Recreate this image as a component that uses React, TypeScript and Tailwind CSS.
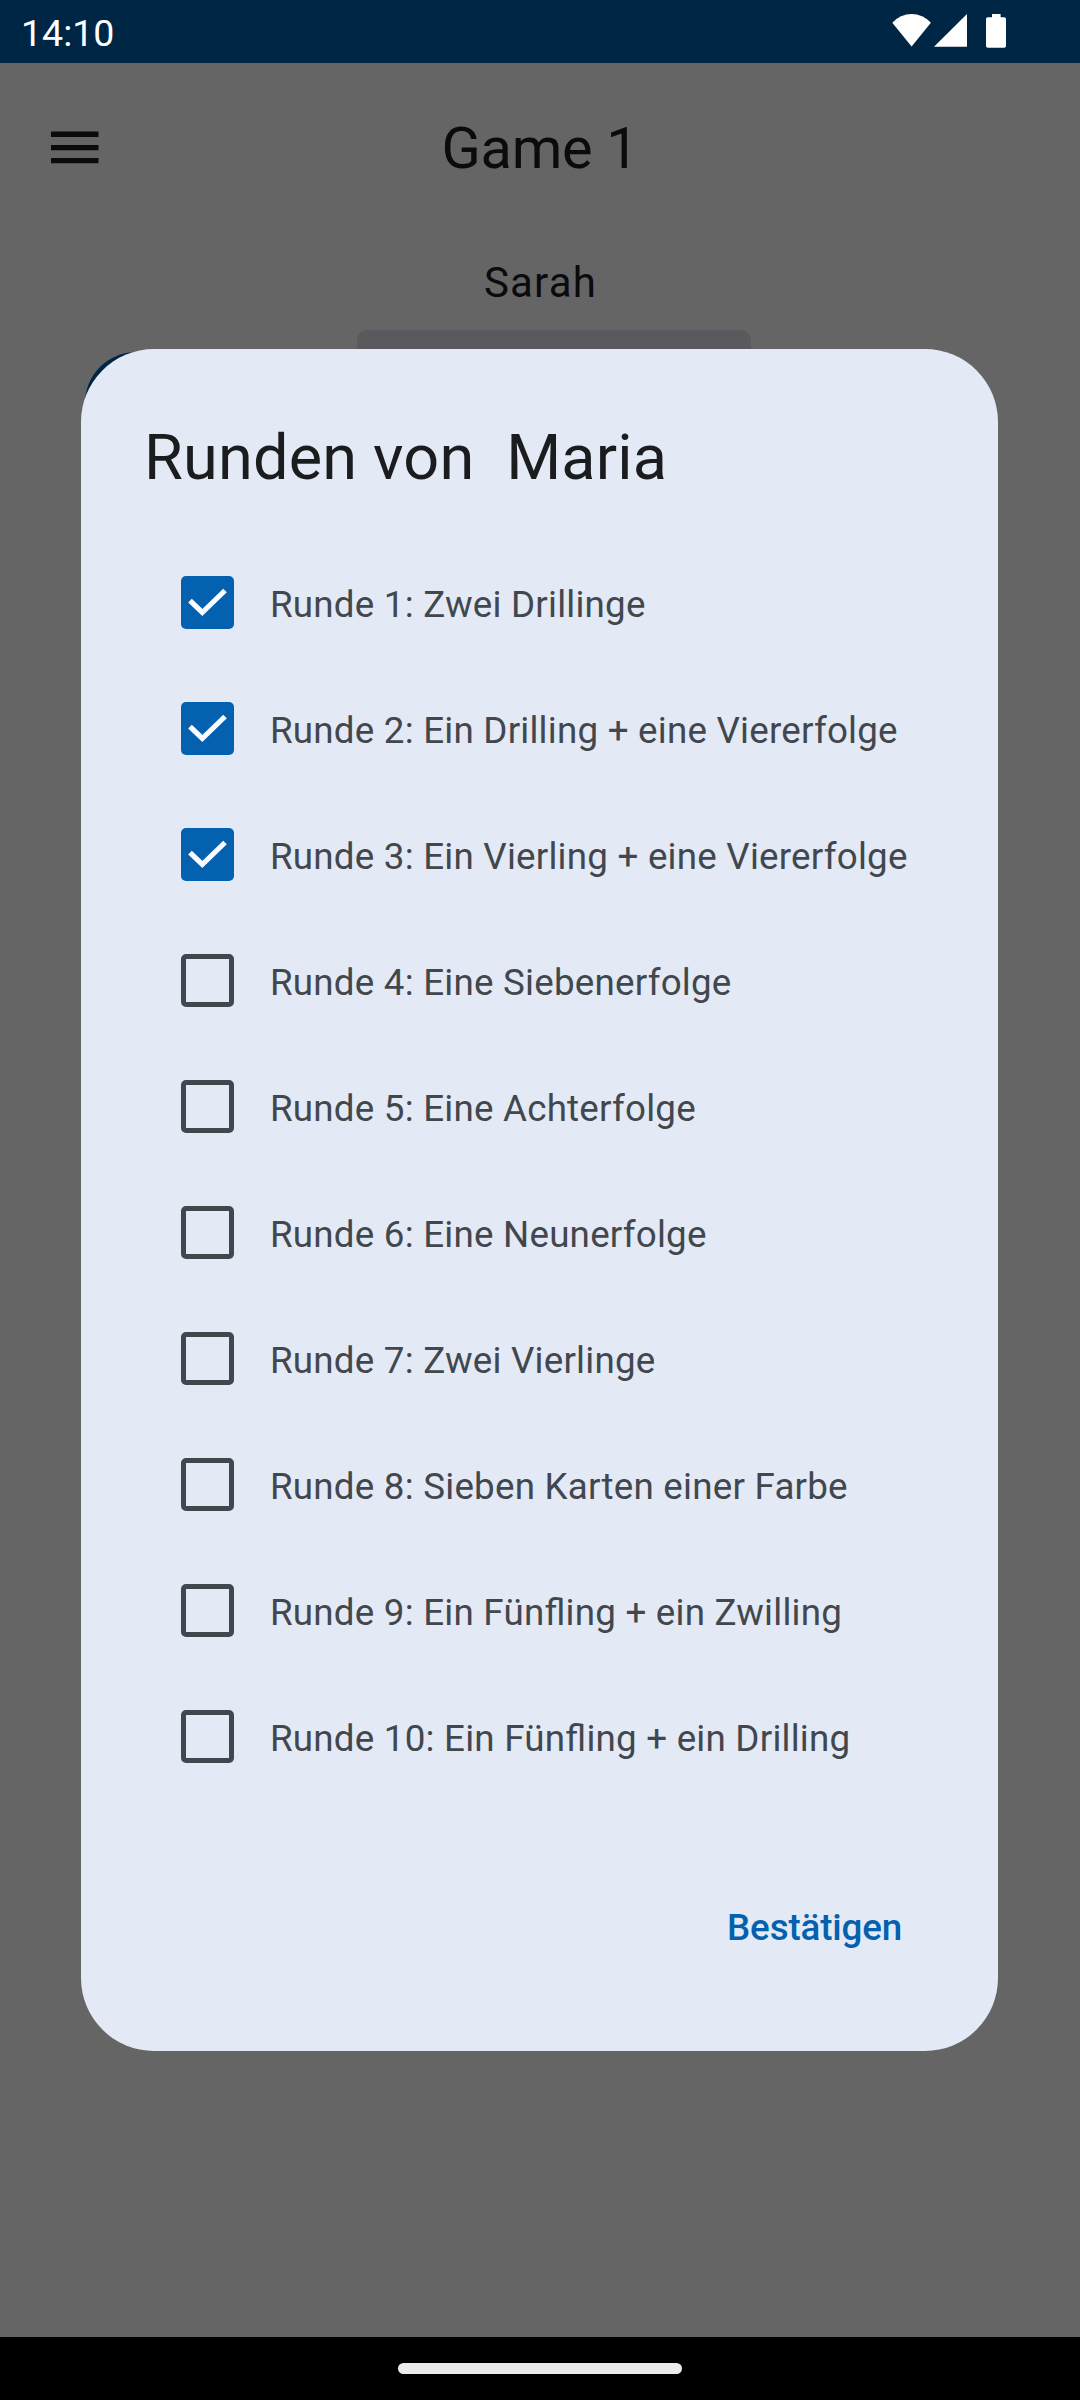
const rounds = [
  { label: 'Runde 1: Zwei Drillinge', done: true },
  { label: 'Runde 2: Ein Drilling + eine Viererfolge', done: true },
  { label: 'Runde 3: Ein Vierling + eine Viererfolge', done: true },
  { label: 'Runde 4: Eine Siebenerfolge', done: false },
  { label: 'Runde 5: Eine Achterfolge', done: false },
  { label: 'Runde 6: Eine Neunerfolge', done: false },
  { label: 'Runde 7: Zwei Vierlinge', done: false },
  { label: 'Runde 8: Sieben Karten einer Farbe', done: false },
  { label: 'Runde 9: Ein Fünfling + ein Zwilling', done: false },
  { label: 'Runde 10: Ein Fünfling + ein Drilling', done: false },
];

function StatusBar() {
  return (
    <header className="flex h-[63px] shrink-0 items-center justify-between bg-[#002645] pl-[21px] pr-[72px] text-white">
      <span className="mt-[3px] text-[37.5px] leading-[44px]">14:10</span>
      <svg className="h-[63px] w-[116px]" viewBox="0 0 116 63" fill="currentColor">
        <path d="M0.3 22.7Q8.5 14 19.6 14T38.9 22.7L19.6 46.5Z" />
        <path d="M42 46.8H75V14Z" />
        <path d="M100 14h8.6v3.2h3.6a1.8 1.8 0 0 1 1.8 1.8v26.9a1.8 1.8 0 0 1-1.8 1.8H95.8a1.8 1.8 0 0 1-1.8-1.8V19a1.8 1.8 0 0 1 1.8-1.8h4.2Z" />
      </svg>
    </header>
  );
}

function Checkbox({ checked }: { checked: boolean }) {
  if (!checked) {
    return <span className="size-[53px] shrink-0 rounded-[5px] border-5 border-[#42474e]" />;
  }
  return (
    <span className="size-[53px] shrink-0 rounded-[5px] bg-[#0461b0]">
      <svg className="size-[53px]" viewBox="0 0 53 53" fill="none" stroke="#fdfcff" strokeWidth="5.2">
        <path d="M9 24.7L21.3 36.5L44 14.5" />
      </svg>
    </span>
  );
}

function RoundsDialog() {
  return (
    <div className="absolute left-[81px] top-[349px] flex h-[1702px] w-[917px] flex-col rounded-[73px] bg-[#e3eaf6]">
      <h2 className="mt-[67px] whitespace-pre pl-[63px] text-[63px] leading-[84px] tracking-[0.2px] text-[#1a1c1e]">
        {'Runden von  Maria'}
      </h2>
      <ul className="mt-[39px] flex flex-col pl-[100px]">
        {rounds.map((round) => (
          <li key={round.label} className="flex h-[126px] items-center gap-[36px]">
            <Checkbox checked={round.done} />
            <span className="mt-[6px] whitespace-nowrap text-[36.75px] leading-[52px] tracking-[0.22px] text-[#42474e] [font-feature-settings:'liga'_1]">
              {round.label}
            </span>
          </li>
        ))}
      </ul>
      <button className="mr-[96px] mt-[103px] self-end text-[36.75px] font-medium leading-[52px] tracking-[-0.15px] text-[#0461b0]">
        Bestätigen
      </button>
    </div>
  );
}

export default function App() {
  return (
    <div className="relative flex h-[2400px] w-[1080px] flex-col overflow-hidden bg-[#656565] font-[Roboto,sans-serif]">
      <StatusBar />
      <main className="flex flex-1 flex-col text-[#0a0b0c]">
        <div className="grid h-[168px] grid-cols-[1fr_auto_1fr] items-center">
          <svg className="ml-[51px] h-[33px] w-[48px]" viewBox="0 0 48 33" fill="currentColor">
            <path d="M0 .6h47.5v5.3H0zM0 14h47.5v5.3H0zM0 27h47.5v5.3H0z" />
          </svg>
          <h1 className="mt-[2px] text-[57.75px] leading-[74px] tracking-[-0.3px]">Game 1</h1>
        </div>
        <p className="mt-[20px] pl-[1px] text-center text-[42px] leading-[63px] tracking-[1.2px]">Sarah</p>
        <div className="ml-[357px] mt-[16px] h-[84px] w-[394px] rounded-[10px] bg-[#5a595e]" />
        <div className="-mt-[62px] ml-[85px] h-[200px] w-[200px] rounded-[51px] bg-[#002645]" />
      </main>
      <RoundsDialog />
      <footer className="flex h-[63px] shrink-0 items-center justify-center bg-black">
        <div className="h-[11px] w-[284px] rounded-full bg-[#ebebeb]" />
      </footer>
    </div>
  );
}
